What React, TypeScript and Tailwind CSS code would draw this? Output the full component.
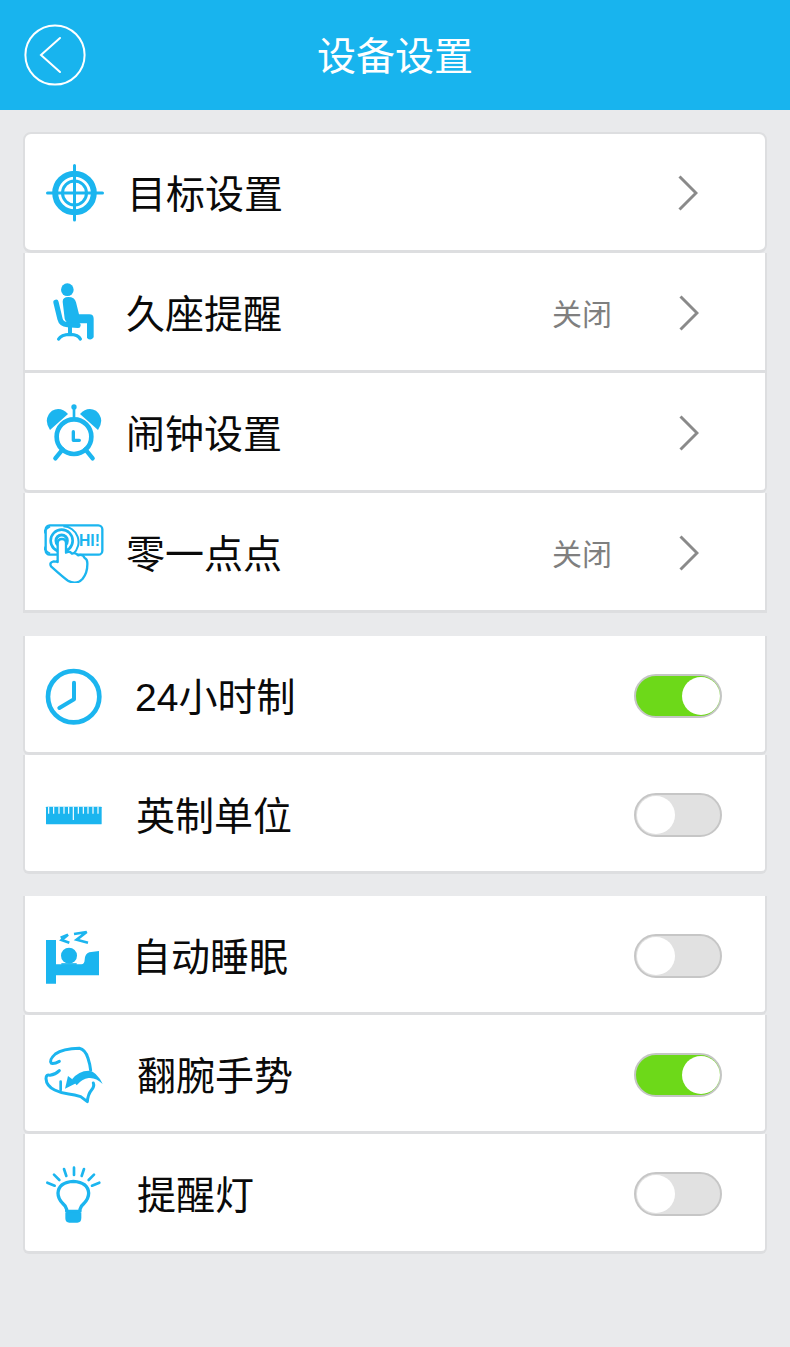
const B = "#1bb5ef";

const Target = () => (
  <svg viewBox="44 163 60 60" className="h-[60px] w-[60px]" fill="none">
    <circle cx="74.5" cy="193" r="19.3" stroke={B} strokeWidth="6" />
    <circle cx="74.5" cy="193" r="12" stroke={B} strokeWidth="3" />
    <path d="M47.5 193H102.5M74.5 165.5V220" stroke={B} strokeWidth="3" strokeLinecap="round" />
  </svg>
);

const Chair = () => (
  <svg viewBox="72 69 180 180" className="h-[60px] w-[60px]" fill="none">
    <circle cx="142" cy="89" r="19" fill={B} />
    <path d="M128 125q0-14 17-14q19 0 23 16l9 36h31q13 0 13 13v56q-9 12-20 2v-44h-48q-15 0-19-14z" fill={B} />
    <path d="M108 127l12 50q4 16 22 17l32 2" stroke={B} strokeWidth="16" strokeLinecap="round" />
    <path d="M150 200v24" stroke={B} strokeWidth="12" />
    <path d="M116 237q8-13 34-14q25 1 31 14" stroke={B} strokeWidth="10" strokeLinecap="round" />
  </svg>
);

const Alarm = () => (
  <svg viewBox="72 69 180 180" className="h-[60px] w-[60px]" fill="none">
    <circle cx="162" cy="170" r="52" stroke={B} strokeWidth="14" />
    <path d="M90 150q-22-34 6-58q26-14 48 10z" fill={B} />
    <path d="M234 150q22-34-6-58q-26-14-48 10z" fill={B} />
    <circle cx="162" cy="81" r="8" fill={B} />
    <path d="M162 81v30" stroke={B} strokeWidth="8" />
    <path d="M128 208l-22 27M196 208l22 27" stroke={B} strokeWidth="13" strokeLinecap="round" />
    <path d="M160 155v26h18" stroke={B} strokeWidth="10" strokeLinecap="round" strokeLinejoin="round" />
  </svg>
);

const Hi = () => (
  <svg viewBox="72 429 180 180" className="h-[60px] w-[60px]" fill="none">
    <rect x="77" y="436" width="170" height="88" rx="12" stroke={B} strokeWidth="7" />
    <path d="M90 439a47 47 0 0 0 0 82M130 439a47 47 0 0 1 30 82" stroke={B} strokeWidth="6" />
    <circle cx="125" cy="482" r="33" stroke={B} strokeWidth="8" />
    <circle cx="125" cy="482" r="17" stroke={B} strokeWidth="9" />
    <text x="177" y="497" fontSize="47" fontWeight="700" fill={B} fontFamily="'Liberation Sans', sans-serif">HI!</text>
    <path d="M113 546V490q0-13 13-13q12 0 12 13v28q10-7 18 3q10-5 18 5q14-5 20 8q8 4 8 15q1 28-14 47q-18 20-44 6q-12-8-51-43q-6-12 8-15q8 0 12 2z" fill="#fff" stroke={B} strokeWidth="7" strokeLinejoin="round" />
  </svg>
);

const Clock = () => (
  <svg viewBox="72 45 180 180" className="h-[60px] w-[60px]" fill="none">
    <circle cx="161" cy="137" r="77" stroke={B} strokeWidth="14" />
    <path d="M162 95v50l-44 26" stroke={B} strokeWidth="12" strokeLinecap="round" strokeLinejoin="round" />
  </svg>
);

const Ruler = () => (
  <svg viewBox="72 402 180 180" className="h-[60px] w-[60px]" fill="none">
    <rect x="78" y="467" width="167" height="53" rx="2" fill={B} />
    <path d="M86 467v21M101 467v21M117 467v21M132 467v21M146 467v21M160 467v40M175 467v21M190 467v21M204 467v21M219 467v21M234 467v21" stroke="#fff" strokeWidth="3.5" />
  </svg>
);

const Bed = () => (
  <svg viewBox="72 45 180 180" className="h-[60px] w-[60px]" fill="none">
    <path d="M78 87h30v73h76q10-2 10-14q1-18 14-22l29-4v73H108v25H78z" fill={B} />
    <circle cx="147" cy="134" r="24" fill={B} />
    <path d="M124 159h46" stroke={B} strokeWidth="5" />
    <path d="M162 69l38-6l-30 23l34 9M122 80l22-9l-19 16l23 8" stroke={B} strokeWidth="8" />
  </svg>
);

const Flip = () => (
  <svg viewBox="72 45 180 180" className="h-[60px] w-[60px]" fill="none">
    <path d="M118 94q-14 8-24 6q-8-10 12-28q22-16 72-17q18 4 26 30q6 18 8 36M118 122q-12 12-28 14q-12-4-12 10q1 22 26 34q20 10 42 12q18 2 36 8l20 15q2-22 12-34q10-12 6-22" stroke={B} strokeWidth="9" strokeLinecap="round" strokeLinejoin="round" />
    <path d="M122 155v25" stroke={B} strokeWidth="8" strokeLinecap="round" />
    <path d="M135 176l9-38l27 20z" fill={B} />
    <path d="M156 148q20-26 50-26q24 2 42 40q-20-20-42-18q-20 2-36 22z" fill={B} />
  </svg>
);

const Bulb = () => (
  <svg viewBox="72 402 180 180" className="h-[60px] w-[60px]" fill="none">
    <path d="M140 544v-6q-2-10-12-18q-14-14-14-31q2-32 46-35q44 3 46 35q0 17-14 31q-10 8-12 18v6z" stroke={B} strokeWidth="10" strokeLinejoin="round" />
    <path d="M136 548h48v16q0 14-12 14h-24q-12 0-12-14z" fill={B} />
    <path d="M162 413v22M132 417l7 21M102 434l16 16M82 458l22 9M192 417l-7 21M222 434l-16 16M238 458l-22 9" stroke={B} strokeWidth="8" strokeLinecap="round" />
  </svg>
);

const Chevron = ({ className }: { className: string }) => (
  <svg viewBox="0 0 20 36" className={className} fill="none">
    <path d="M1.5 1.5L18 18L1.5 34.5" stroke="#8a8a8a" strokeWidth="3" />
  </svg>
);

const Toggle = ({ on }: { on: boolean }) =>
  on ? (
    <div className="mr-[43px] flex h-[44px] w-[88px] items-center justify-end rounded-full border-2 border-[#c4c6c4] bg-[#6dd919]">
      <div className="h-[38px] w-[38px] rounded-full bg-white" />
    </div>
  ) : (
    <div className="mr-[43px] flex h-[44px] w-[88px] items-center justify-start rounded-full border-2 border-[#c6c6c6] bg-[#e1e1e1] pl-[1px]">
      <div className="h-[38px] w-[38px] rounded-full bg-white" />
    </div>
  );

const Row = ({ className, icon, label, labelClass, value, right }: { className: string; icon: React.ReactNode; label: string; labelClass: string; value?: string; right: React.ReactNode }) => (
  <div className={"flex items-center border-[#dddee0] bg-white pl-[19px] " + className}>
    {icon}
    <div className={"flex-1 pt-[3px] text-[39px] leading-none text-[#0a0a0a] " + labelClass}>{label}</div>
    {value && <div className="mr-[67px] pt-[3px] text-[30px] leading-none text-[#7f7f7f]">{value}</div>}
    {right}
  </div>
);

export default function App() {
  return (
    <div className="flex min-h-[1347px] flex-col bg-[#e9eaec] font-['Liberation_Sans','Noto_Sans_CJK_SC',sans-serif]">
      <header className="relative flex h-[110px] items-center justify-center bg-[#18b4ee]">
        <svg viewBox="0 0 62 62" className="absolute left-[24px] top-[24px] h-[62px] w-[62px]" fill="none">
          <circle cx="31" cy="31" r="29.6" stroke="#fff" strokeWidth="2" />
          <path d="M36 14L17 31L36 48" stroke="#fff" strokeWidth="2" strokeLinecap="round" />
        </svg>
        <h1 className="pt-[2px] text-[39px] font-normal leading-none text-white">设备设置</h1>
      </header>

      <div className="mx-[23px] mt-[22px] flex flex-col">
        <Row className="h-[121px] rounded-[8px] border-x-2 border-t-2 border-b-[3px] pt-[1px]" icon={<Target />} label="目标设置" labelClass="ml-[23px]" right={<Chevron className="mr-[67px] h-[36px] w-[20px]" />} />
        <Row className="h-[120px] border-x-2 border-b-[3px] pt-[3px]" icon={<Chair />} label="久座提醒" labelClass="ml-[22px]" value="关闭" right={<Chevron className="mr-[66px] h-[36px] w-[20px]" />} />
        <Row className="h-[120px] rounded-b-[6px] border-x-2 border-b-[3px] pt-[3px]" icon={<Alarm />} label="闹钟设置" labelClass="ml-[22px]" right={<Chevron className="mr-[66px] h-[36px] w-[20px]" />} />
        <Row className="h-[120px] border-x-2 border-b-[3px] pt-[3px]" icon={<Hi />} label="零一点点" labelClass="ml-[22px]" value="关闭" right={<Chevron className="mr-[66px] h-[36px] w-[20px]" />} />
      </div>

      <div className="mx-[23px] mt-[23px] flex flex-col">
        <Row className="h-[119px] rounded-b-[6px] border-x-2 border-b-[3px] pt-[3px]" icon={<Clock />} label="24小时制" labelClass="ml-[31px]" right={<Toggle on />} />
        <Row className="h-[119px] rounded-b-[6px] border-x-2 border-b-[3px] pt-[3px]" icon={<Ruler />} label="英制单位" labelClass="ml-[32px]" right={<Toggle on={false} />} />
      </div>

      <div className="mx-[23px] mt-[22px] flex flex-col">
        <Row className="h-[119px] rounded-b-[6px] border-x-2 border-b-[3px] pt-[3px]" icon={<Bed />} label="自动睡眠" labelClass="ml-[28px]" right={<Toggle on={false} />} />
        <Row className="h-[119px] rounded-b-[6px] border-x-2 border-b-[3px] pt-[3px]" icon={<Flip />} label="翻腕手势" labelClass="ml-[33px]" right={<Toggle on />} />
        <Row className="h-[120px] rounded-b-[6px] border-x-2 border-b-[3px] pt-[3px]" icon={<Bulb />} label="提醒灯" labelClass="ml-[33px]" right={<Toggle on={false} />} />
      </div>
    </div>
  );
}
